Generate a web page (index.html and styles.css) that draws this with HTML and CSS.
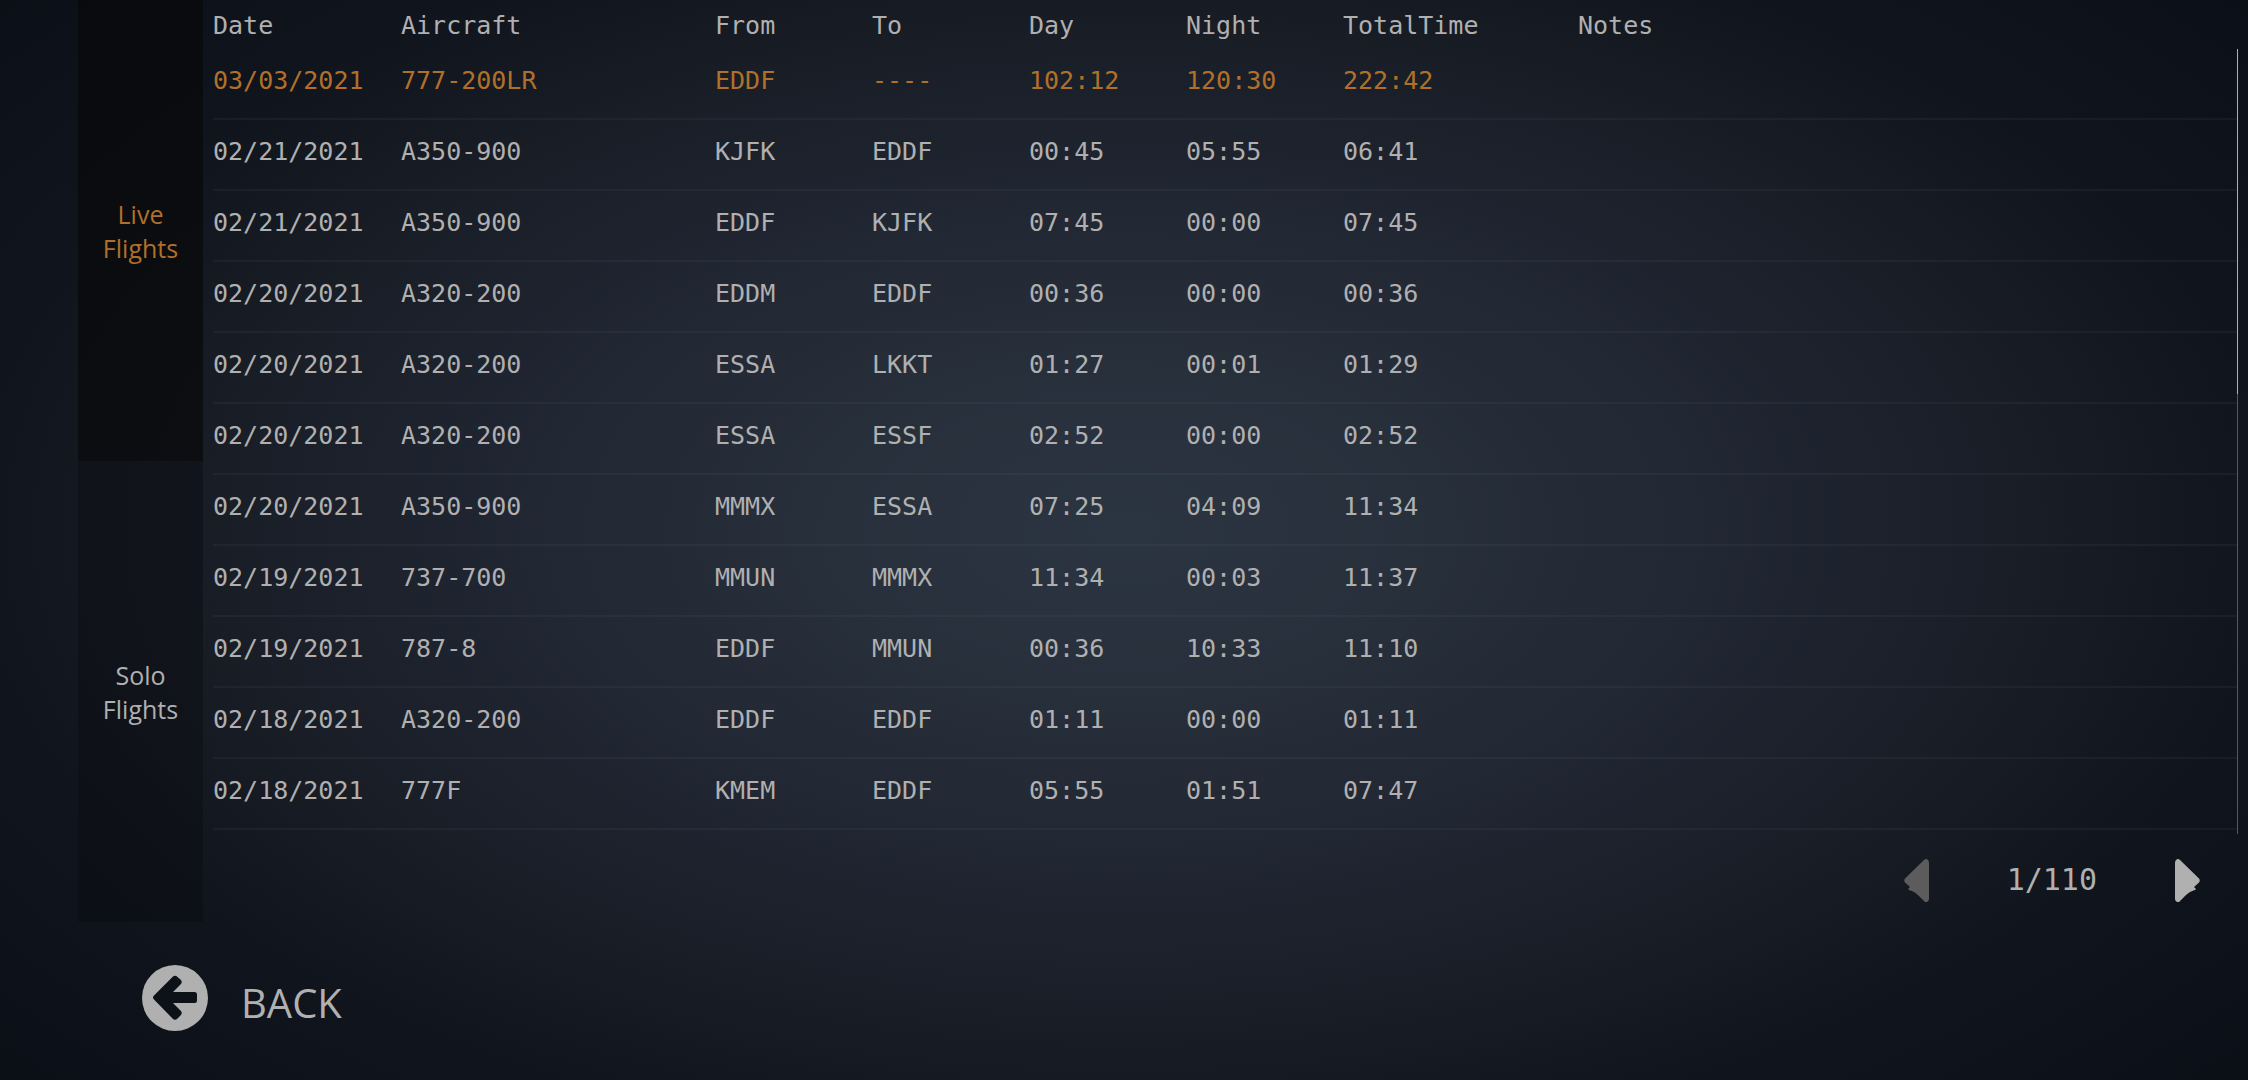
FILE: index.html
```html
<!DOCTYPE html>
<html lang="en">
<head>
<meta charset="utf-8">
<meta name="viewport" content="width=device-width, initial-scale=1">
<title>Logbook</title>
<link rel="stylesheet" href="styles.css">
</head>
<body>
<main class="logbook">
  <nav class="tabs" aria-label="Flight type">
    <button type="button" class="tab tab-active">Live Flights</button>
    <button type="button" class="tab">Solo Flights</button>
  </nav>
  <section class="content">
    <div class="list">
      <table class="flights">
        <colgroup>
          <col class="col-date"><col class="col-aircraft"><col class="col-std"><col class="col-std"><col class="col-std"><col class="col-std"><col class="col-total"><col>
        </colgroup>
        <thead>
          <tr><th>Date</th><th>Aircraft</th><th>From</th><th>To</th><th>Day</th><th>Night</th><th>TotalTime</th><th>Notes</th></tr>
        </thead>
        <tbody>
          <tr class="current"><td>03/03/2021</td><td>777-200LR</td><td>EDDF</td><td>----</td><td>102:12</td><td>120:30</td><td>222:42</td><td></td></tr>
          <tr><td>02/21/2021</td><td>A350-900</td><td>KJFK</td><td>EDDF</td><td>00:45</td><td>05:55</td><td>06:41</td><td></td></tr>
          <tr><td>02/21/2021</td><td>A350-900</td><td>EDDF</td><td>KJFK</td><td>07:45</td><td>00:00</td><td>07:45</td><td></td></tr>
          <tr><td>02/20/2021</td><td>A320-200</td><td>EDDM</td><td>EDDF</td><td>00:36</td><td>00:00</td><td>00:36</td><td></td></tr>
          <tr><td>02/20/2021</td><td>A320-200</td><td>ESSA</td><td>LKKT</td><td>01:27</td><td>00:01</td><td>01:29</td><td></td></tr>
          <tr><td>02/20/2021</td><td>A320-200</td><td>ESSA</td><td>ESSF</td><td>02:52</td><td>00:00</td><td>02:52</td><td></td></tr>
          <tr><td>02/20/2021</td><td>A350-900</td><td>MMMX</td><td>ESSA</td><td>07:25</td><td>04:09</td><td>11:34</td><td></td></tr>
          <tr><td>02/19/2021</td><td>737-700</td><td>MMUN</td><td>MMMX</td><td>11:34</td><td>00:03</td><td>11:37</td><td></td></tr>
          <tr><td>02/19/2021</td><td>787-8</td><td>EDDF</td><td>MMUN</td><td>00:36</td><td>10:33</td><td>11:10</td><td></td></tr>
          <tr><td>02/18/2021</td><td>A320-200</td><td>EDDF</td><td>EDDF</td><td>01:11</td><td>00:00</td><td>01:11</td><td></td></tr>
          <tr><td>02/18/2021</td><td>777F</td><td>KMEM</td><td>EDDF</td><td>05:55</td><td>01:51</td><td>07:47</td><td></td></tr>
        </tbody>
      </table>
      <div class="scrollbar"><div class="scrollbar-thumb"></div></div>
    </div>
    <div class="pager">
      <button type="button" class="page-button" aria-label="Previous page" disabled>
        <svg width="25" height="43" viewBox="0 0 25 43"><path d="M20 1Q22 -1 24 1Q25 2 25 4V40Q25 42 23 43Q21 43.500 20 42L15 37C12 34 9 32 5 31L4 30L6 28L1 23.500Q-.5 21.500 1 19.500Z"/></svg>
      </button>
      <span class="page-label">1/110</span>
      <button type="button" class="page-button" aria-label="Next page">
        <svg width="25" height="43" viewBox="0 0 25 43"><path d="M5 1Q3 -1 1 1Q0 2 0 4V40Q0 42 2 43Q4 43.500 5 42L10 37C13 34 16 32 20 31L21 30L19 28L24 23.500Q25.500 21.500 24 19.500Z"/></svg>
      </button>
    </div>
  </section>
</main>
<footer class="footer">
  <button type="button" class="back">
    <svg width="66" height="66" viewBox="0 0 66 66"><circle class="back-disc" cx="33" cy="33" r="33"/><path class="back-arrow" d="M12 30.500L30.500 12Q33 9.500 35.500 12L38.500 14.500Q41 17 38.500 19.500L31 27H52.500Q55 27 55 29.500V35.500Q55 38 52.500 38H31L38.500 45.500Q41 48 38.500 50.500L35.500 53.500Q33 56 30.500 53.500L12 34.500Q10 32.500 12 30.500Z"/></svg>
    <span class="back-label">BACK</span>
  </button>
</footer>
</body>
</html>
```
FILE: styles.css
```css
* {
  box-sizing: border-box;
}

body {
  margin: 0;
  min-height: 100vh;
  background: radial-gradient(ellipse 58% 66% at 50% 49%, #2b3541 0%, #272f3b 24%, #212733 45%, #181d26 70%, #10141c 90%, #0c1018 110%, #0a0c10 130%) #0a0c10;
  color: #b0b0b0;
  font-family: "Open Sans", "Noto Sans", sans-serif;
}

button {
  border: 0;
  padding: 0;
  background: none;
  color: inherit;
  font: inherit;
}

.logbook {
  display: flex;
  gap: 10px;
  padding: 0 10px 0 78px;
}

.tabs {
  display: flex;
  flex: 0 0 125px;
  flex-direction: column;
}

.tab {
  flex: 1;
  padding: 0 20px;
  background: rgba(10, 11, 14, 0.4);
  font-size: 25px;
  line-height: 34px;
}

.tab-active {
  background: rgba(8, 9, 10, 0.7);
  color: #b0702a;
}

.content {
  flex: 1;
  min-width: 0;
}

.list {
  display: flex;
}

.flights {
  flex: 1;
  margin-bottom: 4px;
  border-collapse: separate;
  border-spacing: 0;
  table-layout: fixed;
  font-family: "DejaVu Sans Mono", "Liberation Mono", monospace;
  font-size: 25px;
  line-height: 30px;
}

.col-date {
  width: 188px;
}

.col-aircraft {
  width: 314px;
}

.col-std {
  width: 157px;
}

.col-total {
  width: 235px;
}

.flights th {
  height: 49px;
  padding: 2px 0 0;
  font-weight: 400;
  text-align: left;
}

.flights td {
  height: 71px;
  padding: 0 0 6px;
  border-bottom: 2px solid rgba(130, 140, 160, 0.08);
}

.current {
  color: #b0702a;
}

.scrollbar {
  flex: 0 0 1px;
  margin-top: 49px;
  background: #55585c;
}

.scrollbar-thumb {
  height: 44%;
  background: #b0b0b4;
}

.pager {
  display: flex;
  align-items: center;
  justify-content: flex-end;
  gap: 78px;
  height: 88px;
  padding: 4px 38px 0 0;
  font-family: "DejaVu Sans Mono", "Liberation Mono", monospace;
  font-size: 30px;
}

.page-label {
  padding-bottom: 2px;
}

.page-button {
  display: flex;
  fill: #b0b0b0;
}

.page-button:disabled {
  fill: #5c5c5c;
}

.footer {
  padding: 43px 142px;
}

.back {
  display: flex;
  align-items: center;
  gap: 33px;
}

.back-disc {
  fill: #b0b0b0;
}

.back-arrow {
  fill: #0d1118;
}

.back-label {
  padding-top: 10px;
  font-size: 40px;
  line-height: 54px;
}
```
